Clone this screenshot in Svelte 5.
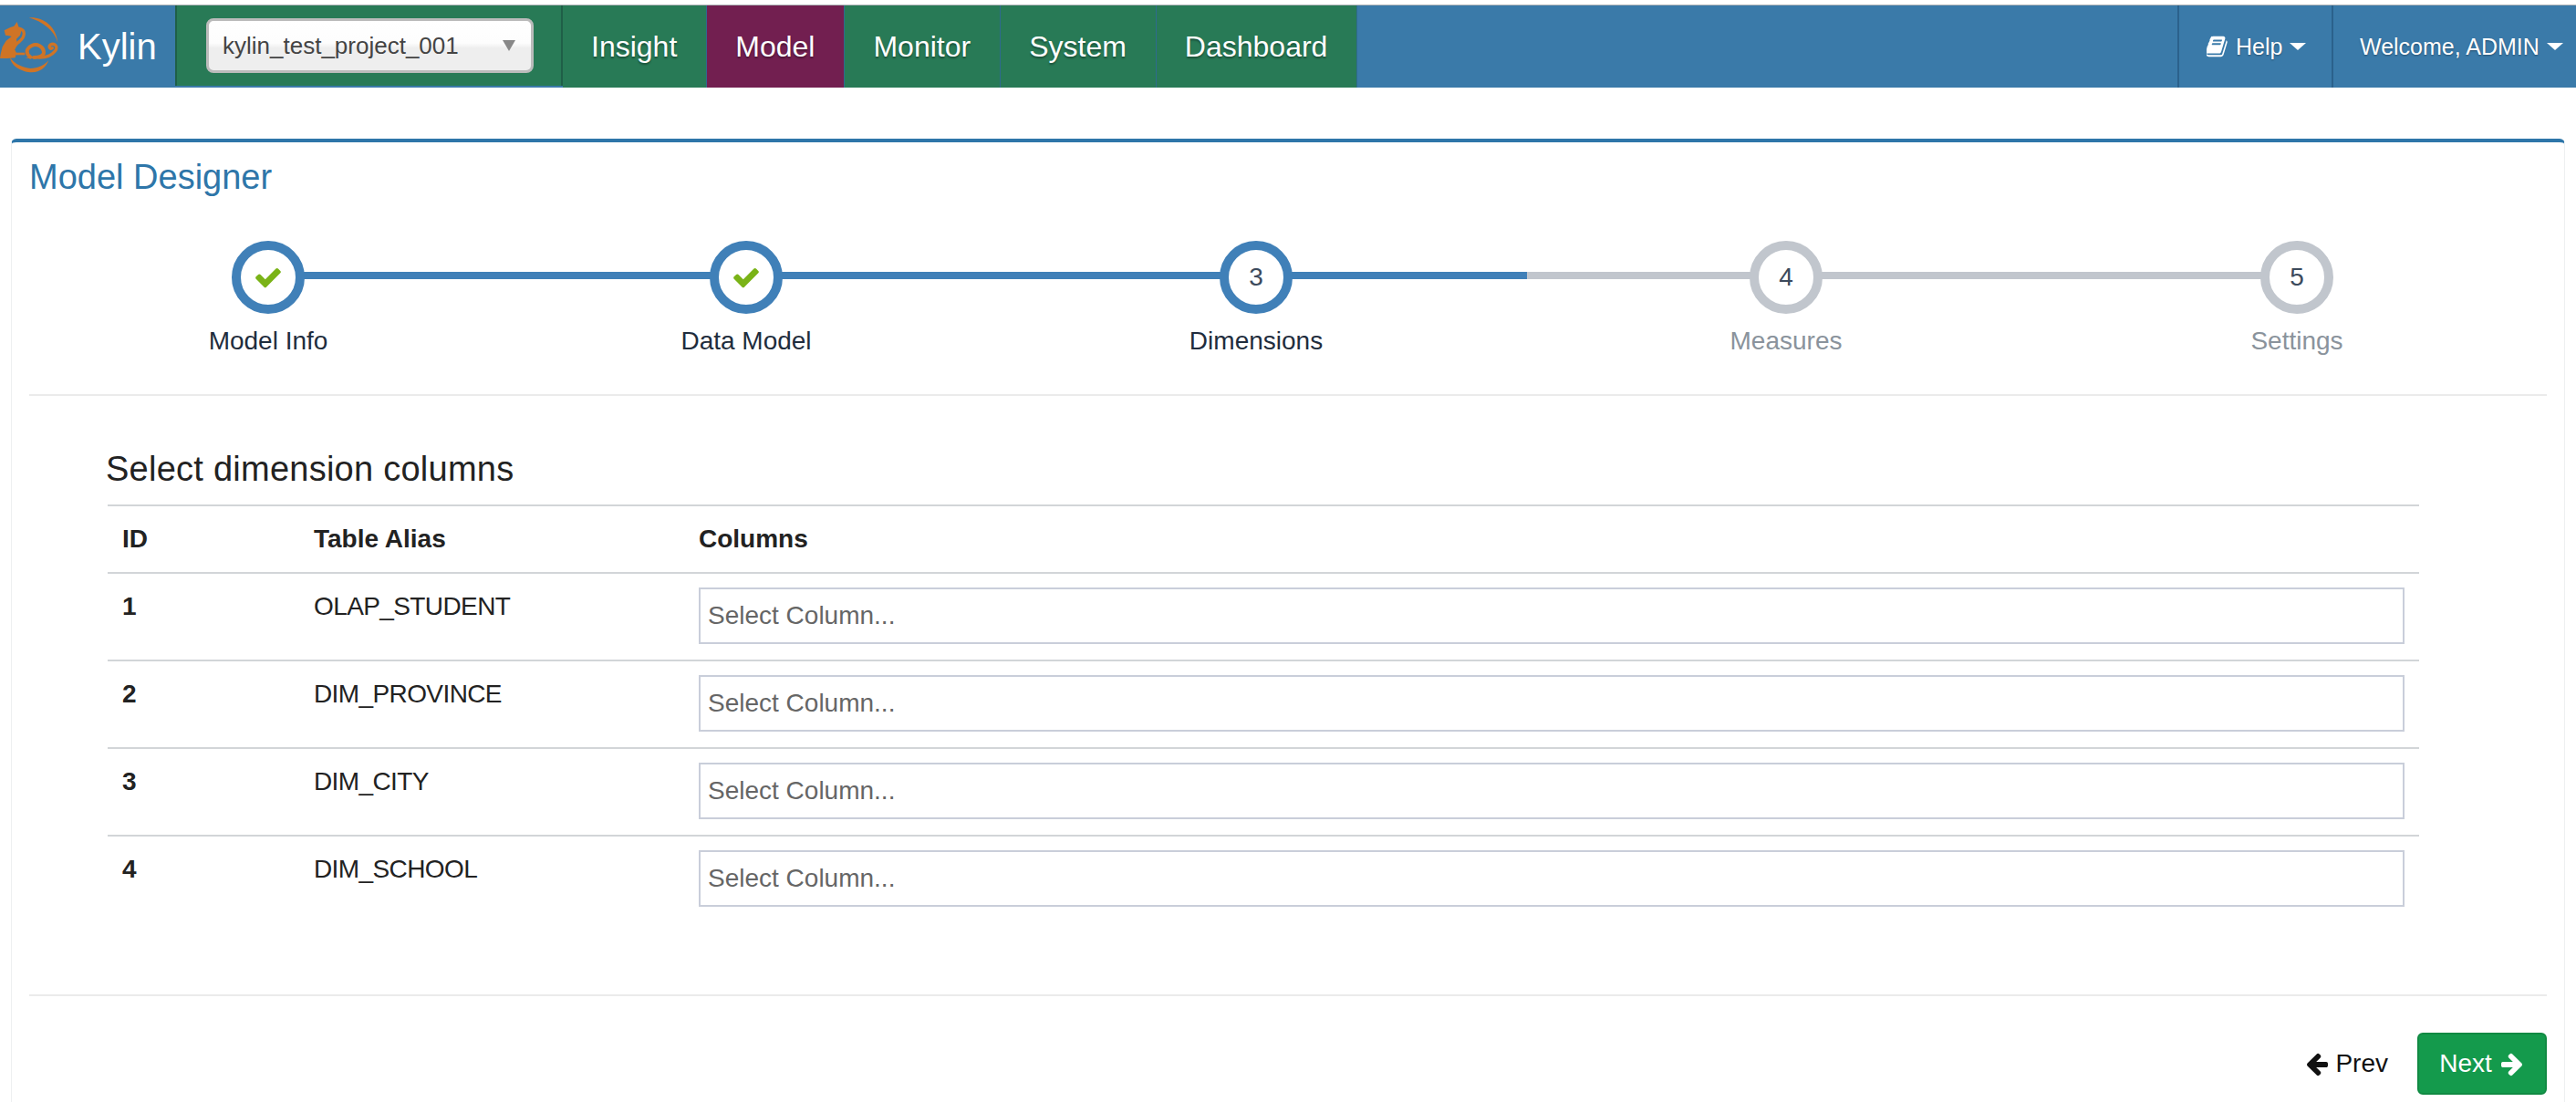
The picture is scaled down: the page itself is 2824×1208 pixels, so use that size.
<script lang="ts">
  const tabs = ['Insight', 'Model', 'Monitor', 'System', 'Dashboard'];
  const steps = [
    { label: 'Model Info', state: 'done' },
    { label: 'Data Model', state: 'done' },
    { label: 'Dimensions', state: 'active', num: 3 },
    { label: 'Measures', state: 'todo', num: 4 },
    { label: 'Settings', state: 'todo', num: 5 }
  ];
  const rows = ['OLAP_STUDENT', 'DIM_PROVINCE', 'DIM_CITY', 'DIM_SCHOOL'];
</script>

<div class="page">
  <header class="navbar">
    <a class="brand" href="#top">
      <svg class="logo" viewBox="0 0 216 216" width="72" height="72" aria-hidden="true">
        <g fill="#cf7426">
          <path d="M95 16 C137 12 184 40 190 98 C178 58 142 30 95 16Z" />
          <path d="M33 148 C38 178 75 196 105 196 C132 196 152 178 160 156 C146 172 125 183 100 183 C75 181 50 170 33 148Z" />
          <path d="M14 58 L34 48 L46 44 L56 30 L61 46 L72 54 L66 74 L54 86 L56 100 L44 112 L54 132 L50 148 L24 150 L0 150 L2 136 L8 112 L20 92 L38 78 L30 76 L18 74 Z" />
          <path d="M82 150 L112 142 L128 150 Z" />
          <path d="M50 131 L82 131 L82 139 L50 139 Z" />
        </g>
        <g fill="none" stroke="#cf7426" stroke-linecap="round">
          <path d="M64 52 C84 56 84 78 64 94 C54 102 48 108 46 116" stroke-width="10" />
          <path d="M100 146 C84 134 85 118 105 108 C122 100 142 112 144 128 C146 141 130 147 112 147" stroke-width="12" />
          <path d="M130 147 C155 147 171 139 181 126 C193 110 178 98 166 105 C158 112 166 122 172 116" stroke-width="10" />
        </g>
      </svg>
      <span>Kylin</span>
    </a>

    <div class="project-cell">
      <div class="project-select">
        <span>kylin_test_project_001</span>
        <i class="select-arrow"></i>
      </div>
    </div>

    <nav class="tabs">
      {#each tabs as tab}
        <a class="tab" class:active={tab === 'Model'} href="#top">{tab}</a>
      {/each}
    </nav>

    <div class="nav-right">
      <a class="drop help" href="#top">
        <svg viewBox="0 0 1664 1792" width="25" height="26" aria-hidden="true">
          <path transform="translate(-128 0)" d="M1639 478q40 57 18 129l-275 906q-19 64-76.5 107.5t-122.5 43.5h-923q-77 0-148.5-53.5t-99.5-131.5q-24-67-2-127 0-4 3-27t4-37q1-8-3-21.5t-3-19.5q2-11 8-21t16.5-23.5 16.5-23.5q23-38 45-91.5t30-91.5q3-10 .5-30t-.5-28q3-11 17-28t17-23q21-36 42-92t25-90q1-9-2.5-32t.5-28q4-13 22-30.5t22-22.5q19-26 42.5-84.5t27.5-96.5q1-8-3-25.5t-2-26.5q2-8 9-18t18-23 17-21q8-12 16.5-30.5t15-35 16-36 19.5-32 26.5-23.5 36-11.5 47.5 5.5l-1 3q38-9 51-9h761q74 0 114 56t18 130l-274 906q-36 119-71.5 153.5t-128.5 34.5h-869q-27 0-38 15-11 16-1 43 24 70 144 70h923q29 0 56-15.5t35-41.5l300-987q7-22 5-57 38 15 59 43zm-1064 2q-4 13 2 22.5t20 9.5h608q13 0 25.5-9.5t16.5-22.5l21-64q4-13-2-22.5t-20-9.5h-608q-13 0-25.5 9.5t-16.5 22.5zm-83 256q-4 13 2 22.5t20 9.5h608q13 0 25.5-9.5t16.5-22.5l21-64q4-13-2-22.5t-20-9.5h-608q-13 0-25.5 9.5t-16.5 22.5z" fill="currentColor" />
        </svg>
        <span>Help</span>
        <i class="caret"></i>
      </a>
      <a class="drop welcome" href="#top">
        <span>Welcome, ADMIN</span>
        <i class="caret"></i>
      </a>
    </div>
  </header>

  <main class="panel">
    <h1 class="panel-title">Model Designer</h1>

    <ol class="wizard">
      {#each steps as step}
        <li class="step {step.state}">
          <div class="badge">
            {#if step.state === 'done'}
              <svg viewBox="0 0 1792 1792" width="32" height="32" aria-hidden="true">
                <path d="M1671 566q0 40-28 68l-724 724-136 136q-28 28-68 28t-68-28l-136-136-362-362q-28-28-28-68t28-68l136-136q28-28 68-28t68 28l294 295 656-657q28-28 68-28t68 28l136 136q28 28 28 68z" fill="#7ab317" />
              </svg>
            {:else}
              {step.num}
            {/if}
          </div>
          <div class="step-label">{step.label}</div>
        </li>
      {/each}
    </ol>

    <section class="content">
      <h2>Select dimension columns</h2>
      <table>
        <thead>
          <tr>
            <th class="col-id">ID</th>
            <th class="col-alias">Table Alias</th>
            <th>Columns</th>
          </tr>
        </thead>
        <tbody>
          {#each rows as row, i}
            <tr>
              <td class="row-id">{i + 1}</td>
              <td class="row-alias">{row}</td>
              <td class="row-input"><input type="text" placeholder="Select Column..." /></td>
            </tr>
          {/each}
        </tbody>
      </table>
    </section>

    <footer class="actions">
      <button class="btn prev" type="button">
        <svg viewBox="0 0 1792 1792" width="28" height="28" aria-hidden="true">
          <path d="M1664 896v128q0 53-32.5 90.5t-84.5 37.5h-704l293 294q38 36 38 90t-38 90l-75 76q-37 37-90 37-52 0-91-37l-651-652q-37-37-37-90 0-52 37-91l651-650q38-38 91-38 52 0 90 38l75 74q38 38 38 91t-38 91l-293 293h704q52 0 84.5 37.5t32.5 90.5z" fill="currentColor" />
        </svg>
        Prev
      </button>
      <button class="btn next" type="button">
        Next
        <svg viewBox="0 0 1792 1792" width="28" height="28" aria-hidden="true">
          <path d="M1600 960q0 54-37 91l-651 651q-39 37-91 37-51 0-90-37l-75-75q-38-38-38-91t38-91l293-293h-704q-52 0-84.5-37.5t-32.5-90.5v-128q0-53 32.5-90.5t84.5-37.5h704l-293-294q-38-36-38-90t38-90l75-75q38-38 90-38 53 0 91 38l651 651q37 35 37 90z" fill="currentColor" />
        </svg>
      </button>
    </footer>
  </main>
</div>

<style>
  :global(body) {
    margin: 0;
    background: #fff;
  }

  .page {
    height: 1208px;
    overflow: hidden;
    box-sizing: border-box;
    padding-top: 5px;
    font-family: "Liberation Sans", Arial, sans-serif;
    color: #222;
  }

  .navbar {
    display: flex;
    height: 91px;
    box-sizing: border-box;
    border-top: 1px solid #aab0b4;
    background: #3a7aa9;
  }

  .brand {
    display: flex;
    align-items: center;
    width: 192px;
    box-sizing: border-box;
    color: #fff;
    font-size: 40px;
    text-decoration: none;
    overflow: hidden;
  }

  .logo {
    flex: none;
    margin: -2px 13px 0 0;
  }

  .project-cell {
    display: flex;
    width: 425px;
    height: 88px;
    box-sizing: border-box;
    padding: 14px 30px 0 32px;
    background: #287a56;
    border-left: 2px solid #1f5f47;
    border-right: 2px solid #1f5f47;
  }

  .project-select {
    display: flex;
    align-items: center;
    justify-content: space-between;
    width: 360px;
    height: 60px;
    box-sizing: border-box;
    padding: 0 17px 0 15px;
    border: 3px solid #bbb;
    border-radius: 8px;
    background: linear-gradient(#fff 0%, #fdfdfd 45%, #eee 55%, #eee 100%);
    color: #444;
    font-size: 26px;
  }

  .select-arrow {
    width: 0;
    height: 0;
    border-left: 7px solid transparent;
    border-right: 7px solid transparent;
    border-top: 12px solid #888;
  }

  .tabs {
    display: flex;
  }

  .tab {
    display: flex;
    align-items: center;
    padding: 0 32px 0 31px;
    background: #287a56;
    border-right: 1px solid #2e6a8e;
    color: #fff;
    font-size: 32px;
    text-decoration: none;
    text-shadow: 0 2px 2px rgba(0, 0, 0, 0.35);
  }

  .tab.active {
    background: #721f50;
  }

  .nav-right {
    display: flex;
    margin-left: auto;
  }

  .drop {
    display: flex;
    align-items: center;
    border-left: 2px solid #2b618c;
    color: #fff;
    font-size: 25px;
    text-decoration: none;
    text-shadow: 0 1px 2px rgba(0, 0, 0, 0.35);
  }

  .help {
    width: 169px;
    box-sizing: border-box;
    padding-left: 30px;
  }

  .help svg {
    margin-right: 7px;
  }

  .welcome {
    width: 268px;
    box-sizing: border-box;
    padding-left: 29px;
  }

  .caret {
    margin-left: 8px;
    width: 0;
    height: 0;
    border-left: 9px solid transparent;
    border-right: 9px solid transparent;
    border-top: 8px solid #fff;
  }

  .panel {
    margin: 56px 12px 0;
    height: 1100px;
    padding: 0 19px;
    box-sizing: border-box;
    border: 1px solid #eef0f1;
    border-top: 4px solid #2e76a9;
    border-radius: 6px 6px 0 0;
    background: #fff;
  }

  .panel-title {
    margin: 0;
    padding-top: 16px;
    height: 76px;
    box-sizing: border-box;
    color: #2e76a9;
    font-size: 38px;
    font-weight: 400;
    line-height: 44px;
  }

  .wizard {
    display: grid;
    grid-template-columns: 524px 524px 594px 568px 552px;
    height: 202px;
    box-sizing: border-box;
    margin: 0;
    padding: 32px 0 0;
    list-style: none;
    border-bottom: 2px solid #ebebeb;
  }

  .step {
    position: relative;
    display: flex;
    flex-direction: column;
    align-items: center;
  }

  .step::before {
    content: "";
    position: absolute;
    top: 34px;
    left: 0;
    right: 0;
    height: 8px;
    background: #4080b8;
  }

  .step:first-child::before {
    left: 50%;
  }

  .step:last-child::before {
    right: 50%;
  }

  .step.todo::before {
    background: #c1c6cd;
  }

  .badge {
    position: relative;
    display: flex;
    align-items: center;
    justify-content: center;
    width: 80px;
    height: 80px;
    box-sizing: border-box;
    border: 10px solid #4080b8;
    border-radius: 50%;
    background: #fff;
    color: #3c4a5c;
    font-size: 28px;
  }

  .todo .badge {
    border-color: #c1c6cd;
  }

  .step-label {
    margin-top: 10px;
    color: #1f2d3d;
    font-size: 28px;
    line-height: 40px;
  }

  .todo .step-label {
    color: #8a939c;
  }

  .content {
    padding: 58px 0 0 86px;
  }

  h2 {
    margin: 0 0 17px -2px;
    color: #222;
    font-size: 38px;
    font-weight: 400;
    line-height: 44px;
    letter-spacing: 0.25px;
  }

  table {
    width: 2534px;
    border-collapse: separate;
    border-spacing: 0;
    table-layout: fixed;
    font-size: 28px;
  }

  th {
    height: 76px;
    box-sizing: border-box;
    padding: 0 16px;
    border-top: 2px solid #d2d5d8;
    border-bottom: 2px solid #d2d5d8;
    text-align: left;
  }

  .col-id {
    width: 210px;
  }

  .col-alias {
    width: 422px;
  }

  td {
    height: 96px;
    box-sizing: border-box;
    padding: 16px;
    vertical-align: top;
    border-bottom: 2px solid #d2d5d8;
    line-height: 40px;
  }

  tbody tr:last-child td {
    height: 94px;
    border-bottom: none;
  }

  .row-id {
    font-weight: 700;
  }

  .row-alias {
    letter-spacing: -0.6px;
  }

  .row-input {
    padding-top: 15px;
  }

  input {
    display: block;
    width: 100%;
    height: 62px;
    box-sizing: border-box;
    padding: 0 8px;
    border: 2px solid #c9ceda;
    outline: none;
    color: #555;
    font-family: inherit;
    font-size: 28px;
  }

  input::placeholder {
    color: #666;
    opacity: 1;
  }

  .actions {
    display: flex;
    justify-content: flex-end;
    align-items: center;
    gap: 32px;
    margin-top: 79px;
    padding-top: 40px;
    border-top: 2px solid #ebebeb;
  }

  .btn {
    display: flex;
    align-items: center;
    gap: 6px;
    border: none;
    background: none;
    padding: 0;
    color: #111;
    font-family: inherit;
    font-size: 28px;
  }

  .next {
    justify-content: center;
    gap: 8px;
    width: 142px;
    height: 68px;
    box-sizing: border-box;
    border: 2px solid #118a43;
    border-radius: 6px;
    background: #149a4c;
    color: #fff;
  }
</style>
